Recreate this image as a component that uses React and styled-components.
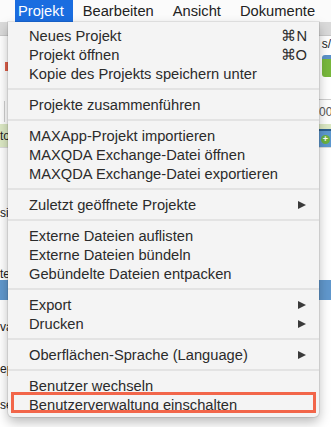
import React from 'react';
import styled, { createGlobalStyle } from 'styled-components';

const GlobalStyle = createGlobalStyle`
  html, body {
    margin: 0;
    padding: 0;
    background: #ffffff;
    font-family: "Liberation Sans", Arial, sans-serif;
  }
  body {
    width: 331px;
    height: 427px;
    overflow: hidden;
  }
`;

const colors = {
  TEXT: '#2b2b2b',
  MENU_BG: '#f4f4f4',
  DIVIDER: '#e3e3e3',
  SELECTED: '#1a6de0',
  TOOLBAR: '#dadada',
  HIGHLIGHT: '#f2664a',
};

const Screen = styled.div`
  position: relative;
  width: 331px;
  height: 427px;
  overflow: hidden;
  background: #ffffff;
`;

const MenuBar = styled.div`
  display: flex;
  align-items: stretch;
  height: 22px;
  padding-left: 15px;
  background: #fbfbfb;
`;

const MenuTitle = styled.div`
  display: flex;
  align-items: center;
  padding: ${props => (props.active ? '0 9px 0 3px' : '0 9px 0 10px')};
  font-size: 14.7px;
  color: ${props => (props.active ? '#ffffff' : '#222')};
  background: ${props => (props.active ? colors.SELECTED : 'transparent')};
`;

/* the app window behind the menu, only its edges are visible */
const Backdrop = styled.div`
  display: flex;
  flex-direction: column;
`;

const Toolbar = styled.div`
  height: 13px;
  background: ${colors.TOOLBAR};
  border-bottom: 1px solid #c9c9c9;
`;

const Band = styled.div`
  display: flex;
  justify-content: space-between;
  align-items: center;
  height: ${props => props.h}px;
  background: ${props => props.bg || 'transparent'};
  border-top: ${props => (props.line ? '1px solid #dcdcdc' : 'none')};
  font-size: 12px;
  color: #222;
`;

const EdgeText = styled.span`
  font-size: 12px;
  color: #222;
  white-space: nowrap;
`;

const RedMark = styled.div`
  width: 3px;
  height: 9px;
  margin-left: 5px;
  background: #e0604a;
`;

const GreenShape = styled.div`
  width: 9px;
  height: 22px;
  background: linear-gradient(180deg, #5b92c9 0 4px, #78b83c 4px);
  border-radius: 3px 0 0 3px;
`;

const VLine = styled.div`
  width: 1px;
  height: 21px;
  margin-left: 4px;
  background: #cfcfcf;
`;

const NumBox = styled.div`
  width: 12px;
  height: 24px;
  border-top: 1px solid #cfcfcf;
  border-bottom: 1px solid #cfcfcf;
  display: flex;
  align-items: center;
  font-size: 12px;
  color: #555;
  overflow: hidden;
`;

const BlueBar = styled.div`
  display: flex;
  align-items: center;
  justify-content: flex-end;
  width: 12px;
  height: 16px;
  align-self: flex-end;
  background: #5d98cf;
  border-top: 2px solid #2c5f8f;
`;

const PlusDot = styled.div`
  width: 9px;
  height: 9px;
  border-radius: 50%;
  background: #6db33f;
  color: #fff;
  font-size: 9px;
  line-height: 9px;
  text-align: center;
  font-weight: bold;
  margin-right: 1px;
`;

const Menu = styled.div`
  position: absolute;
  top: 22px;
  left: 8px;
  width: 311px;
  padding: 4px 0 3px;
  box-sizing: border-box;
  background: ${colors.MENU_BG};
  border-radius: 0 0 5px 5px;
  box-shadow: 0 0 0 1px rgba(0, 0, 0, 0.08), 0 5px 12px rgba(0, 0, 0, 0.28);
`;

const Item = styled.div`
  position: relative;
  display: flex;
  align-items: center;
  justify-content: space-between;
  height: 19px;
  padding: 0 13px 0 21px;
  font-size: 14.7px;
  color: ${colors.TEXT};
  white-space: nowrap;
`;

const Shortcut = styled.span`
  font-size: 14.7px;
  color: ${colors.TEXT};
  margin-right: -1px;
`;

const Arrow = styled.span`
  width: 0;
  height: 0;
  border-top: 4.5px solid transparent;
  border-bottom: 4.5px solid transparent;
  border-left: 8px solid #3a3a3a;
`;

const Separator = styled.div`
  height: 12px;
  display: flex;
  align-items: center;
  &::after {
    content: '';
    flex: 1;
    height: 2px;
    background: ${colors.DIVIDER};
  }
`;

const Highlight = styled.div`
  position: absolute;
  top: -3px;
  left: 3px;
  right: 3px;
  height: 21px;
  border: 3px solid ${colors.HIGHLIGHT};
  box-sizing: border-box;
  pointer-events: none;
`;

const groups = [
  [
    { label: 'Neues Projekt', shortcut: '⌘N' },
    { label: 'Projekt öffnen', shortcut: '⌘O' },
    { label: 'Kopie des Projekts speichern unter' },
  ],
  [{ label: 'Projekte zusammenführen' }],
  [
    { label: 'MAXApp-Projekt importieren' },
    { label: 'MAXQDA Exchange-Datei öffnen' },
    { label: 'MAXQDA Exchange-Datei exportieren' },
  ],
  [{ label: 'Zuletzt geöffnete Projekte', submenu: true }],
  [
    { label: 'Externe Dateien auflisten' },
    { label: 'Externe Dateien bündeln' },
    { label: 'Gebündelte Dateien entpacken' },
  ],
  [
    { label: 'Export', submenu: true },
    { label: 'Drucken', submenu: true },
  ],
  [{ label: 'Oberflächen-Sprache (Language)', submenu: true }],
  [
    { label: 'Benutzer wechseln' },
    { label: 'Benutzerverwaltung einschalten', marked: true },
  ],
];

export default function App() {
  return (
    <Screen>
      <GlobalStyle />
      <MenuBar>
        <MenuTitle active>Projekt</MenuTitle>
        <MenuTitle>Bearbeiten</MenuTitle>
        <MenuTitle>Ansicht</MenuTitle>
        <MenuTitle>Dokumente</MenuTitle>
      </MenuBar>

      <Backdrop>
        <Toolbar />
        <Band h={16}>
          <span />
          <EdgeText>s/</EdgeText>
        </Band>
        <Band h={28}>
          <RedMark />
          <GreenShape />
        </Band>
        <Band h={19} />
        <Band h={25}>
          <VLine />
          <NumBox>00</NumBox>
        </Band>
        <Band h={23} bg="#dce9c4">
          <EdgeText>to</EdgeText>
          <BlueBar>
            <PlusDot>+</PlusDot>
          </BlueBar>
        </Band>
        <Band h={58} line />
        <Band h={14}>
          <EdgeText>sis</EdgeText>
          <span />
        </Band>
        <Band h={48} />
        <Band h={12}>
          <EdgeText>te</EdgeText>
          <span />
        </Band>
        <Band h={20} bg="#6198cd" />
        <Band h={20} />
        <Band h={14}>
          <EdgeText>va</EdgeText>
          <span />
        </Band>
        <Band h={28} />
        <Band h={14}>
          <EdgeText>ep</EdgeText>
          <span />
        </Band>
        <Band h={22} />
        <Band h={14}>
          <EdgeText>se</EdgeText>
          <span />
        </Band>
      </Backdrop>

      <Menu>
        {groups.map((group, gi) => (
          <React.Fragment key={gi}>
            {gi > 0 && <Separator />}
            {group.map(item => (
              <Item key={item.label}>
                <span>{item.label}</span>
                {item.shortcut && <Shortcut>{item.shortcut}</Shortcut>}
                {item.submenu && <Arrow />}
                {item.marked && <Highlight />}
              </Item>
            ))}
          </React.Fragment>
        ))}
      </Menu>
    </Screen>
  );
}
